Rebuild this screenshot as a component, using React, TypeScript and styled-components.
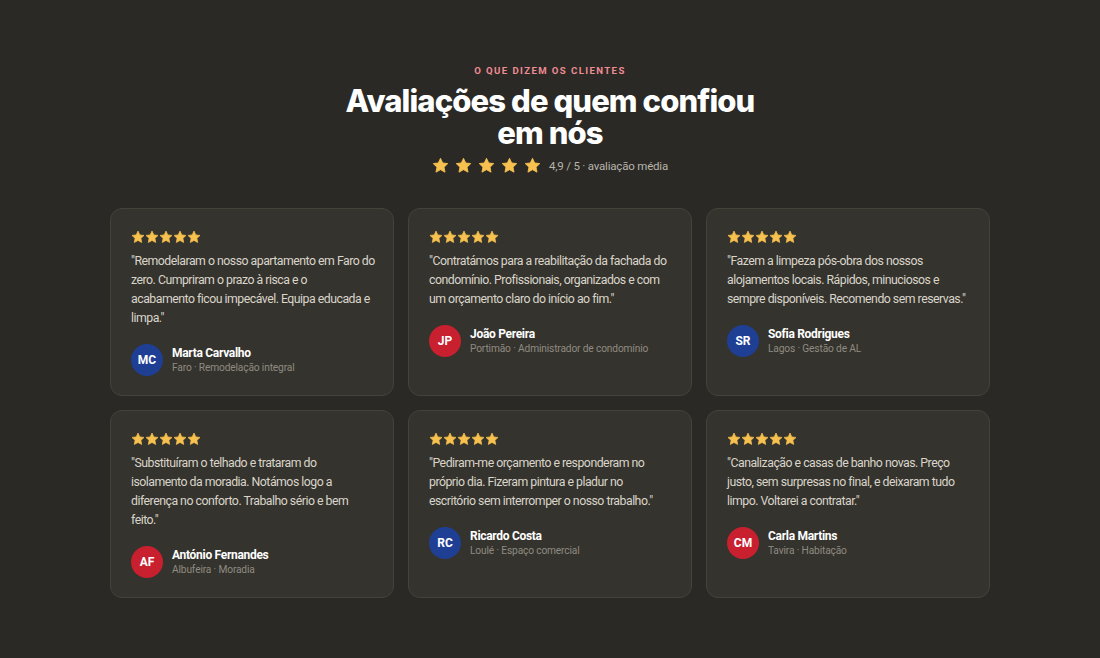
import React from "react";
import styled, { createGlobalStyle } from "styled-components";

const Global = createGlobalStyle`
  html, body { margin: 0; padding: 0; background: #2a2925; }
  body { font-family: Roboto, "Noto Sans", sans-serif; -webkit-font-smoothing: antialiased; }
`;

const Section = styled.section`
  min-height: 658px;
  box-sizing: border-box;
  padding: 65px 110px 60px;
  background: #2a2925;
  display: flex;
  flex-direction: column;
  align-items: center;
`;

const Eyebrow = styled.div`
  font-family: Roboto, sans-serif;
  font-weight: 700;
  font-size: 9.6px;
  letter-spacing: 1.4px;
  color: #f08c93;
  text-transform: uppercase;
  line-height: 12px;
`;

const Title = styled.h2`
  margin: 8px 0 0;
  max-width: 440px;
  text-align: center;
  font-family: Inter, Roboto, sans-serif;
  font-weight: 800;
  font-size: 31px;
  line-height: 32px;
  letter-spacing: -0.9px;
  color: #ffffff;
`;

const RatingRow = styled.div`
  margin-top: 8px;
  display: flex;
  align-items: center;
  gap: 8px;
`;

const Stars = styled.div<{ $gap: number }>`
  display: flex;
  gap: ${(p) => p.$gap}px;
`;

const RatingText = styled.span`
  font-size: 11.5px;
  color: #b8b4aa;
  letter-spacing: -0.2px;
`;

const Grid = styled.div`
  margin-top: 34px;
  width: 880px;
  display: grid;
  grid-template-columns: repeat(3, 1fr);
  gap: 14px;
`;

const Card = styled.article`
  box-sizing: border-box;
  min-height: 187px;
  padding: 21px 10px 19px 20px;
  background: #35332d;
  border: 1px solid #45423a;
  border-radius: 12px;
  display: flex;
  flex-direction: column;
`;

const Quote = styled.p`
  margin: 8px 0 0;
  font-size: 12.3px;
  line-height: 19px;
  letter-spacing: -0.5px;
  color: #d9d5cb;
`;

const Line = styled.span`
  display: block;
  white-space: nowrap;
`;

const Author = styled.div`
  margin-top: 16px;
  display: flex;
  align-items: center;
  gap: 9px;
`;

const Avatar = styled.div<{ $tone: "blue" | "red" }>`
  width: 32px;
  height: 32px;
  flex: none;
  border-radius: 50%;
  background: ${(p) => (p.$tone === "blue" ? "#1f3f95" : "#c8202f")};
  color: #fff;
  display: flex;
  align-items: center;
  justify-content: center;
  font-size: 12px;
  font-weight: 700;
`;

const Who = styled.div`
  display: flex;
  flex-direction: column;
`;

const Name = styled.span`
  font-size: 12px;
  font-weight: 700;
  color: #ffffff;
  line-height: 15px;
  letter-spacing: -0.3px;
`;

const Meta = styled.span`
  font-size: 10.2px;
  color: #8f8b82;
  line-height: 13px;
  letter-spacing: -0.15px;
`;

const Star = ({ size }: { size: number }) => (
  <svg width={size} height={size} viewBox="0 0 24 24">
    <path
      d="M12 1.8l3.1 6.6 7.2.9-5.3 5 1.4 7.1L12 17.9l-6.4 3.5L7 14.3l-5.3-5 7.2-.9z"
      fill="#f7c14f"
      stroke="#f7c14f"
      strokeWidth="1.2"
      strokeLinejoin="round"
    />
  </svg>
);

const FiveStars = ({ size, gap }: { size: number; gap: number }) => (
  <Stars $gap={gap}>
    {[0, 1, 2, 3, 4].map((i) => (
      <Star key={i} size={size} />
    ))}
  </Stars>
);

type Review = {
  lines: string[];
  initials: string;
  name: string;
  meta: string;
  tone: "blue" | "red";
};

const reviews: Review[] = [
  {
    lines: [
      "\"Remodelaram o nosso apartamento em Faro do",
      "zero. Cumpriram o prazo à risca e o",
      "acabamento ficou impecável. Equipa educada e",
      "limpa.\"",
    ],
    initials: "MC",
    name: "Marta Carvalho",
    meta: "Faro · Remodelação integral",
    tone: "blue",
  },
  {
    lines: [
      "\"Contratámos para a reabilitação da fachada do",
      "condomínio. Profissionais, organizados e com",
      "um orçamento claro do início ao fim.\"",
    ],
    initials: "JP",
    name: "João Pereira",
    meta: "Portimão · Administrador de condomínio",
    tone: "red",
  },
  {
    lines: [
      "\"Fazem a limpeza pós-obra dos nossos",
      "alojamentos locais. Rápidos, minuciosos e",
      "sempre disponíveis. Recomendo sem reservas.\"",
    ],
    initials: "SR",
    name: "Sofia Rodrigues",
    meta: "Lagos · Gestão de AL",
    tone: "blue",
  },
  {
    lines: [
      "\"Substituíram o telhado e trataram do",
      "isolamento da moradia. Notámos logo a",
      "diferença no conforto. Trabalho sério e bem",
      "feito.\"",
    ],
    initials: "AF",
    name: "António Fernandes",
    meta: "Albufeira · Moradia",
    tone: "red",
  },
  {
    lines: [
      "\"Pediram-me orçamento e responderam no",
      "próprio dia. Fizeram pintura e pladur no",
      "escritório sem interromper o nosso trabalho.\"",
    ],
    initials: "RC",
    name: "Ricardo Costa",
    meta: "Loulé · Espaço comercial",
    tone: "blue",
  },
  {
    lines: [
      "\"Canalização e casas de banho novas. Preço",
      "justo, sem surpresas no final, e deixaram tudo",
      "limpo. Voltarei a contratar.\"",
    ],
    initials: "CM",
    name: "Carla Martins",
    meta: "Tavira · Habitação",
    tone: "red",
  },
];

export default function App() {
  return (
    <>
      <Global />
      <Section>
        <Eyebrow>O que dizem os clientes</Eyebrow>
        <Title>Avaliações de quem confiou em nós</Title>
        <RatingRow>
          <FiveStars size={17} gap={6} />
          <RatingText>4,9 / 5 · avaliação média</RatingText>
        </RatingRow>
        <Grid>
          {reviews.map((r) => (
            <Card key={r.initials}>
              <FiveStars size={14} gap={0} />
              <Quote>
                {r.lines.map((l) => (
                  <Line key={l}>{l}</Line>
                ))}
              </Quote>
              <Author>
                <Avatar $tone={r.tone}>{r.initials}</Avatar>
                <Who>
                  <Name>{r.name}</Name>
                  <Meta>{r.meta}</Meta>
                </Who>
              </Author>
            </Card>
          ))}
        </Grid>
      </Section>
    </>
  );
}
